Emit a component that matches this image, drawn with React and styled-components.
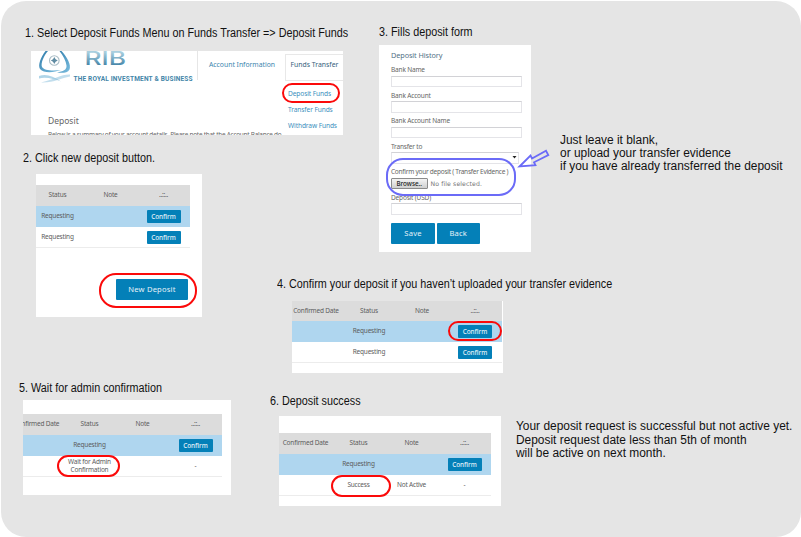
import React from "react";
import styled, { createGlobalStyle, css } from "styled-components";

const Global = createGlobalStyle`
  html, body { margin: 0; background: #fff; }
  * { box-sizing: border-box; }
`;

const Sheet = styled.main`
  display: flex;
  width: 800px;
  height: 535.5px;
  margin: 1px 0 0 1px;
  border-radius: 25px;
  background: #e5e5e5;
  overflow: hidden;
  font-family: "Noto Sans", sans-serif;
`;

const Column = styled.div`
  display: flex;
  flex-direction: column;
  align-items: flex-start;
  flex: none;
  width: ${(p) => p.$w}px;
  padding-top: ${(p) => p.$top}px;
`;

const Step = styled.section`
  flex: none;
  height: ${(p) => p.$h}px;
  padding-left: ${(p) => p.$indent}px;
`;

const Caption = styled.h2`
  margin: 0;
  height: ${(p) => p.$h}px;
  font: 400 12px/16px "Liberation Sans", Arial, sans-serif;
  color: #111;
  white-space: nowrap;
  transform: scaleX(0.899);
  transform-origin: 0 0;
`;

const StepBody = styled.div`
  display: flex;
  align-items: flex-start;
`;

const Shot = styled.div`
  position: relative;
  flex: none;
  width: ${(p) => p.$w}px;
  height: ${(p) => p.$h}px;
  margin-left: ${(p) => p.$left}px;
  padding-top: ${(p) => p.$top || 0}px;
  padding-right: ${(p) => p.$right || 0}px;
  background: #fff;
`;

const Note = styled.p`
  margin: ${(p) => p.$top}px 0 0 ${(p) => p.$left}px;
  font: 400 12px/${(p) => p.$lh}px "Liberation Sans", Arial, sans-serif;
  color: #111;
  white-space: nowrap;
  transform: scaleX(0.993);
  transform-origin: 0 0;
`;

const Ring = styled.div`
  position: absolute;
  left: ${(p) => p.$x}px;
  top: ${(p) => p.$y}px;
  width: ${(p) => p.$w}px;
  height: ${(p) => p.$h}px;
  border: 2px solid ${(p) => p.$color || "#fb0a0a"};
  border-radius: ${(p) => p.$r || 12}px;
`;

/* ---- deposit tables ---- */

const Table = styled.div`
  display: flex;
  flex-direction: column;
  overflow: hidden;
`;

const Row = styled.div`
  display: flex;
  justify-content: flex-end;
  align-items: center;
  flex: none;
  height: ${(p) => p.$h || 20.5}px;
  ${(p) => p.$kind === "head" && css`background: #dcdcdc;`}
  ${(p) => p.$kind === "active" && css`background: #afd6ef;`}
  ${(p) => p.$kind === "plain" && css`
    height: 21px;
    padding-top: 1px;
    border-bottom: 1px solid #ececec;
  `}
`;

const Cell = styled.div`
  flex: none;
  width: 53px;
  text-align: center;
  font-size: 6.5px;
  line-height: 8.5px;
  letter-spacing: -0.21px;
  color: #5c5c5c;
  white-space: pre-line;
`;

const Confirm = styled.button`
  display: block;
  width: 34px;
  height: 13px;
  margin: 0 auto;
  padding: 0;
  border: 0;
  border-radius: 1px;
  background: #0480b8;
  color: #e4f2f9;
  font: 500 6.4px/13px "Noto Sans", sans-serif;
`;

const BigButton = styled.button`
  display: block;
  width: ${(p) => p.$w}px;
  height: 21px;
  padding: 0;
  border: 0;
  border-radius: 1px;
  background: #0480b8;
  color: #e4f2f9;
  font: 400 7.6px/21px "Noto Sans", sans-serif;
  letter-spacing: 0.18px;
`;

const NewDepositSlot = styled.div`
  display: flex;
  justify-content: flex-end;
  padding: 31px 2px 0 0;
`;

const COLUMNS = [
  { key: "date", label: "Confirmed Date" },
  { key: "status", label: "Status" },
  { key: "note", label: "Note" },
  { key: "action", label: "..::.." },
];

function DepositTable({ rows, headHeight = 21, columns = COLUMNS }) {
  return (
    <Table>
      <Row $kind="head" $h={headHeight}>
        {columns.map((c) => <Cell key={c.key}>{c.label}</Cell>)}
      </Row>
      {rows.map((r, i) => (
        <Row key={i} $kind={i === 0 ? "active" : "plain"}>
          {columns.map((c) => (
            <Cell key={c.key}>
              {c.key === "action" ? (r.confirm ? <Confirm>Confirm</Confirm> : "-") : r[c.key]}
            </Cell>
          ))}
        </Row>
      ))}
    </Table>
  );
}

const requesting = { status: "Requesting", confirm: true };

/* ---- site header ---- */

const ShotFrame = styled.div`
  position: relative;
  height: 83.5px;
  overflow: hidden;
`;

const SiteHead = styled.div`
  display: flex;
  height: 83.5px;
`;

const Brand = styled.div`
  flex: none;
  width: 167px;
  height: 29px;
  border-right: 1px solid #e6e6e6;
`;

const NavItem = styled.div`
  flex: none;
  width: 87px;
  padding-left: 11px;
  font-size: 6.8px;
  line-height: 27px;
  color: #3c85ae;
  white-space: nowrap;
`;

const OpenNav = styled.div`
  flex: none;
  width: 58px;
`;

const OpenTab = styled.div`
  height: 26.5px;
  margin-top: 3px;
  padding-left: 4.5px;
  border: 1px solid #e8e8e8;
  border-right: 0;
  font-size: 6.85px;
  line-height: 20px;
  color: #35617c;
  white-space: nowrap;
`;

const Menu = styled.div`
  padding-top: 5px;
`;

const MenuItem = styled.div`
  height: 16px;
  padding-left: 3px;
  font-size: 6.6px;
  line-height: 16px;
  letter-spacing: -0.1px;
  color: #3c8fbd;
  white-space: nowrap;
`;

const PageText = styled.div`
  position: absolute;
  left: 17px;
  top: 62.5px;
  color: #666;
  white-space: nowrap;
`;

const PageTitle = styled.div`
  font-size: 8.5px;
  line-height: 14px;
`;

const PageLead = styled.div`
  margin-top: 2.5px;
  font-size: 6.4px;
  line-height: 9px;
  letter-spacing: -0.25px;
`;

function BrandLogo() {
  return (
    <svg width="166" height="36" viewBox="31 51 166 36">
      <defs>
        <linearGradient id="swoosh" x1="0" y1="0" x2="1" y2="1">
          <stop offset="0" stopColor="#2f7ba9" />
          <stop offset="1" stopColor="#7dc0e2" />
        </linearGradient>
        <linearGradient id="letters" x1="0" y1="0" x2="0" y2="1">
          <stop offset="0.2" stopColor="#a9cfdf" />
          <stop offset="1" stopColor="#2a7199" />
        </linearGradient>
      </defs>
      <path d="M45.5 51C41 57 37.5 65 40 69C44 73.5 54 72.5 61 70C52 71 44 70.5 42 67C40.5 63 44 55.5 48 51Z" fill="url(#swoosh)" />
      <path d="M61.5 51C67 57 71.5 65 69.5 69.5C67.5 73.5 61 73 57 72.5C63 71.5 67 70 66.5 65.5C66 61 63 55.5 59.5 51Z" fill="url(#swoosh)" />
      <circle cx="54.3" cy="60.5" r="4.8" fill="#fff" stroke="#a9bcc5" strokeWidth="1.1" />
      <path d="M54.3 57L55.6 59.2L57.8 60.5L55.6 61.8L54.3 64L53 61.8L50.8 60.5L53 59.2Z" fill="#5f8ba2" />
      <path d="M39 76C46 73.5 53 76 61 81.5C54 79 46 76.5 39 78.5Z" fill="#8fc3de" opacity=".7" />
      <path d="M70 74.5C60 74.5 54 79.5 41 82.5C54 83 61 78 70 76.5Z" fill="#8fc3de" opacity=".55" />
      <text x="84.5" y="65" textLength="41.5" lengthAdjust="spacingAndGlyphs" fontFamily="Inter, sans-serif" fontSize="18" fontWeight="500" fill="url(#letters)">RIB</text>
      <text x="73.5" y="80.7" textLength="119" lengthAdjust="spacing" fontFamily="Roboto, sans-serif" fontSize="6.5" fontWeight="700" fill="#4385a8">THE ROYAL INVESTMENT &amp; BUSINESS</text>
    </svg>
  );
}

/* ---- deposit form ---- */

const Form = styled.div`
  display: flex;
  flex-direction: column;
  padding: 5px 0 0 12px;
`;

const FormTitle = styled.div`
  height: 15px;
  font-size: 7.3px;
  line-height: 11px;
  letter-spacing: -0.1px;
  color: #527186;
`;

const Field = styled.label`
  display: block;
  height: 25.5px;
  font-size: 6.5px;
  line-height: 10.5px;
  letter-spacing: ${(p) => p.$ls || -0.17}px;
  color: #666;
  white-space: nowrap;
`;

const Input = styled.div`
  width: ${(p) => p.$w || 131}px;
  height: 11.5px;
  border: 1px solid #e4e4e8;
  border-top-color: #d2d2d6;
  background: #fff;
`;

const Select = styled(Input)`
  display: flex;
  justify-content: flex-end;
  align-items: center;
  padding-right: 1px;
`;

const FileRow = styled.div`
  display: flex;
  align-items: center;
  gap: 3px;
  height: 11px;
  font: 400 6.2px/11px "DejaVu Sans", sans-serif;
  letter-spacing: 0.1px;
  color: #777;
`;

const Browse = styled.div`
  width: 36.5px;
  height: 11px;
  border: 1px solid #8b8b8b;
  border-radius: 1px;
  background: linear-gradient(#f4f4f4, #cfcfcf);
  font: 500 6.3px/9px "Noto Sans", sans-serif;
  letter-spacing: 0;
  color: #222;
  text-align: center;
`;

const Actions = styled.div`
  display: flex;
  gap: 1.5px;
  margin-top: 4.5px;
`;

const Pointer = styled.svg`
  position: absolute;
  left: 138px;
  top: 105px;
  overflow: visible;
`;

export default function App() {
  return (
    <>
      <Global />
      <Sheet>
        <Column $w={269} $top={24}>
          <Step $h={125} $indent={24}>
            <Caption $h={26}>1. Select Deposit Funds Menu on Funds Transfer =&gt; Deposit Funds</Caption>
            <Shot $w={312} $h={83.5} $left={6}>
              <ShotFrame>
                <SiteHead>
                  <Brand><BrandLogo /></Brand>
                  <NavItem>Account Information</NavItem>
                  <OpenNav>
                    <OpenTab>Funds Transfer</OpenTab>
                    <Menu>
                      <MenuItem>Deposit Funds</MenuItem>
                      <MenuItem>Transfer Funds</MenuItem>
                      <MenuItem>Withdraw Funds</MenuItem>
                    </Menu>
                  </OpenNav>
                </SiteHead>
                <PageText>
                  <PageTitle>Deposit</PageTitle>
                  <PageLead>Below is a summary of your account details. Please note that the Account Balance do</PageLead>
                </PageText>
              </ShotFrame>
              <Ring $x={251} $y={32} $w={58} $h={20} $r={10} />
            </Shot>
          </Step>
          <Step $h={230} $indent={22}>
            <Caption $h={24}>2. Click new deposit button.</Caption>
            <Shot $w={166} $h={143} $left={13} $top={11} $right={12}>
              <DepositTable columns={COLUMNS.slice(1)} rows={[requesting, requesting]} />
              <NewDepositSlot><BigButton $w={72}>New Deposit</BigButton></NewDepositSlot>
              <Ring $x={63} $y={99} $w={98} $h={35} $r={17} />
            </Shot>
          </Step>
          <Step $h={130} $indent={18}>
            <Caption $h={20}>5. Wait for admin confirmation</Caption>
            <Shot $w={208} $h={95} $left={4} $top={14} $right={9}>
              <DepositTable rows={[requesting, { status: "Wait for Admin\nConfirmation" }]} />
              <Ring $x={34} $y={55} $w={63} $h={22} />
            </Shot>
          </Step>
        </Column>

        <Column $w={531} $top={23}>
          <Step $h={252} $indent={109}>
            <Caption $h={21}>3. Fills deposit form</Caption>
            <StepBody>
              <Shot $w={152} $h={206.5} $left={0}>
                <Form>
                  <FormTitle>Deposit History</FormTitle>
                  <Field>Bank Name<Input /></Field>
                  <Field>Bank Account<Input /></Field>
                  <Field>Bank Account Name<Input /></Field>
                  <Field>
                    Transfer to
                    <Select $w={128}>
                      <svg width="5" height="3"><path d="M0.5 0H4.5L2.5 2.5Z" fill="#222" /></svg>
                    </Select>
                  </Field>
                  <Field $ls={-0.25}>
                    Confirm your deposit ( Transfer Evidence )
                    <FileRow><Browse>Browse..</Browse>No file selected.</FileRow>
                  </Field>
                  <Field>Deposit (USD)<Input /></Field>
                  <Actions>
                    <BigButton $w={44}>Save</BigButton>
                    <BigButton $w={43.5}>Back</BigButton>
                  </Actions>
                </Form>
                <Ring $x={7} $y={113} $w={130} $h={38} $r={17} $color="#6b6bf7" />
                <Pointer width="34" height="22" viewBox="517 150 34 22">
                  <path d="M519.5 166.5L530.5 155.5L532 158.5L546 150.8L548.3 155L534 162.3L535.5 165.2Z" fill="none" stroke="#6b6bf7" strokeWidth="1.8" />
                </Pointer>
              </Shot>
              <Note $left={29} $top={89} $lh={13.2}>
                Just leave it blank,<br />or upload your transfer evidence<br />if you have already transferred the deposit
              </Note>
            </StepBody>
          </Step>
          <Step $h={117} $indent={7}>
            <Caption $h={25}>4. Confirm your deposit if you haven’t uploaded your transfer evidence</Caption>
            <Shot $w={210.5} $h={72} $left={15} $right={1}>
              <DepositTable headHeight={20} rows={[requesting, requesting]} />
              <Ring $x={156} $y={20} $w={54} $h={20} $r={10} />
            </Shot>
          </Step>
          <Step $h={130} $indent={0}>
            <Caption $h={23}>6. Deposit success</Caption>
            <StepBody>
              <Shot $w={222} $h={90} $left={9} $top={17} $right={10}>
                <DepositTable rows={[requesting, { status: "Success", note: "Not Active" }]} />
                <Ring $x={52} $y={59} $w={60} $h={22} />
              </Shot>
              <Note $left={15} $top={4} $lh={13.6}>
                Your deposit request is successful but not active yet.<br />Deposit request date less than 5th of month<br />will be active on next month.
              </Note>
            </StepBody>
          </Step>
        </Column>
      </Sheet>
    </>
  );
}
